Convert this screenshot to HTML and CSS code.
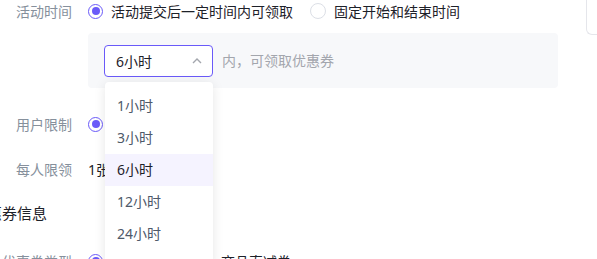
FILE: index.html
```html
<!DOCTYPE html>
<html lang="zh-CN">

<head>
    <meta charset="UTF-8">
    <meta name="viewport" content="width=device-width, initial-scale=1.0">
    <title>活动设置</title>
    <link rel="stylesheet" href="styles.css">
</head>

<body>
    <div class="page">
        <div class="form">
            <div class="row">
                <span class="label">活动时间</span>
                <div class="options">
                    <label class="radio checked"><span class="dot"></span>活动提交后一定时间内可领取</label>
                    <label class="radio"><span class="dot"></span>固定开始和结束时间</label>
                </div>
            </div>

            <div class="sub-box">
                <div class="select-wrap">
                    <div class="select open">
                        <span>6小时</span>
                        <svg class="arrow" width="12" height="12" viewBox="0 0 12 12">
                            <path d="M2 8 L6 4 L10 8" fill="none" stroke="#a3a6ad" stroke-width="1.4" />
                        </svg>
                    </div>
                    <ul class="dropdown">
                        <li>1小时</li>
                        <li>3小时</li>
                        <li class="active">6小时</li>
                        <li>12小时</li>
                        <li>24小时</li>
                    </ul>
                </div>
                <span class="hint">内，可领取优惠券</span>
            </div>

            <div class="row row-user">
                <span class="label">用户限制</span>
                <div class="options">
                    <label class="radio checked"><span class="dot"></span>不限制</label>
                </div>
            </div>

            <div class="row row-limit">
                <span class="label">每人限领</span>
                <div class="options"><span class="value">1张</span></div>
            </div>

            <h3 class="section-title">优惠券信息</h3>

            <div class="row row-type">
                <span class="label">优惠券类型</span>
                <div class="options">
                    <label class="radio checked"><span class="dot"></span>店铺满减券</label>
                    <label class="radio"><span class="dot"></span>商品直减券</label>
                </div>
            </div>
        </div>

        <div class="side-card"></div>
    </div>
</body>

</html>
```

FILE: styles.css
```css
/* 基础 */
body {
    margin: 0;
    padding: 0;
    background: #fff;
    font-family: "Noto Sans", "Noto Sans CJK SC", sans-serif;
    font-size: 14px;
    color: #1d2129;
    overflow: hidden;
}

.page {
    display: flex;
    align-items: flex-start;
}

.form {
    width: 586px;
    flex-shrink: 0;
}

.side-card {
    width: 40px;
    height: 44px;
    margin-top: -10px;
    border: 1px solid #e5e6eb;
    border-right: none;
    border-top: none;
    border-radius: 0 0 0 6px;
}

/* 表单行 */
.row {
    display: flex;
    align-items: center;
    height: 22px;
}

.label {
    width: 72px;
    flex-shrink: 0;
    text-align: right;
    color: #86909c;
    margin-right: 16px;
    white-space: nowrap;
}

.options {
    display: flex;
    align-items: center;
    gap: 17px;
}

.radio {
    display: flex;
    align-items: center;
    gap: 8px;
    white-space: nowrap;
}

.dot {
    width: 14px;
    height: 14px;
    border: 1px solid #dcdfe6;
    border-radius: 50%;
    box-sizing: content-box;
    display: inline-flex;
    align-items: center;
    justify-content: center;
}

.radio.checked .dot {
    border: 1.5px solid #6a5af9;
    width: 13px;
    height: 13px;
}

.radio.checked .dot::after {
    content: "";
    width: 8px;
    height: 8px;
    border-radius: 50%;
    background: #6a5af9;
}

/* 灰色子区域 */
.sub-box {
    margin: 11px 0 0 88px;
    width: 470px;
    height: 55px;
    box-sizing: border-box;
    padding: 12px 16px 0;
    background: #f7f8fa;
    border-radius: 4px;
    display: flex;
    align-items: flex-start;
    gap: 9px;
}

.select-wrap {
    position: relative;
}

.select {
    width: 109px;
    height: 32px;
    box-sizing: border-box;
    border: 1px solid #6a5af9;
    border-radius: 4px;
    background: #fff;
    display: flex;
    align-items: center;
    justify-content: space-between;
    padding: 0 9px 0 11px;
}

.hint {
    line-height: 32px;
    color: #a3a6ad;
}

.dropdown {
    position: absolute;
    top: 37px;
    left: 1px;
    width: 108px;
    margin: 0;
    padding: 8px 0 16px;
    list-style: none;
    background: #fff;
    border-radius: 4px;
    box-shadow: 0 2px 12px rgba(0, 0, 0, 0.1);
    z-index: 10;
}

.dropdown li {
    height: 32px;
    line-height: 32px;
    padding-left: 12px;
    color: #4e5969;
}

.dropdown li.active {
    background: #f5f3ff;
    color: #1d2129;
}

/* 其他行 */
.row-user {
    margin-top: 25px;
}

.row-limit {
    margin-top: 23px;
}

.value {
    color: #1d2129;
}

.section-title {
    margin: 22px 0 0 -28px;
    height: 22px;
    line-height: 22px;
    font-size: 15px;
    font-weight: 400;
    color: #1d2129;
}

.row-type {
    margin-top: 26px;
}

.row-type .options {
    gap: 16px;
}
```
